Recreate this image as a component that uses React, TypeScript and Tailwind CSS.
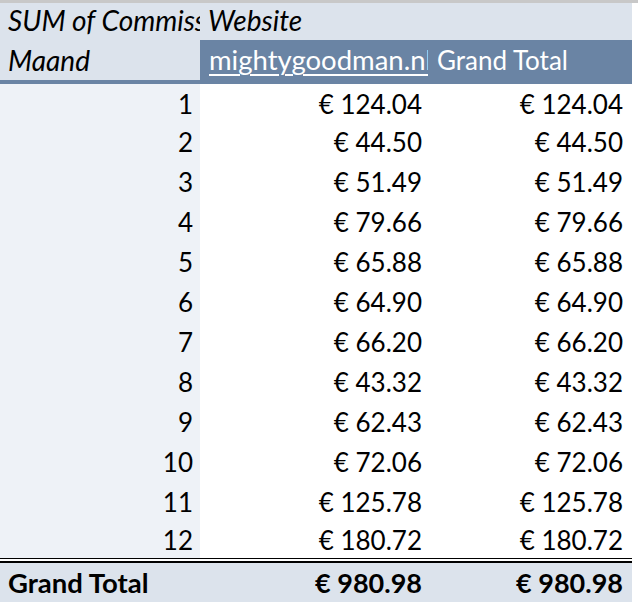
import React from "react";

const rows: [number, string][] = [
  [1, "124.04"],
  [2, "44.50"],
  [3, "51.49"],
  [4, "79.66"],
  [5, "65.88"],
  [6, "64.90"],
  [7, "66.20"],
  [8, "43.32"],
  [9, "62.43"],
  [10, "72.06"],
  [11, "125.78"],
  [12, "180.72"],
];

function DataRow({ n, v, h, lh }: { n: number; v: string; h: string; lh: string }) {
  return (
    <div className={`grid grid-cols-[200px_230px_202px] ${h}`}>
      <div className={`flex items-end justify-end bg-[#eef2f7] pr-[7px] ${lh}`}>{n}</div>
      <div className={`flex items-end justify-end bg-white pr-[8px] ${lh}`}>€ {v}</div>
      <div className={`flex items-end justify-end bg-white pr-[9px] ${lh}`}>€ {v}</div>
    </div>
  );
}

export default function App() {
  return (
    <div className="w-[638px] h-[608px] bg-white text-black font-['Lato','Open_Sans',sans-serif] text-[26px] overflow-hidden">
      <div className="h-[3px] w-full bg-[#c8c8c8]" />
      <div className="w-[632px]">
        <div className="grid grid-cols-[200px_230px_202px] h-[37px] bg-[#dce3ec] italic text-[28px]">
          <div className="flex items-end overflow-hidden whitespace-nowrap pl-[8px] leading-10">SUM of Commissie</div>
          <div className="flex items-end overflow-hidden whitespace-nowrap pl-[8px] leading-10">Website</div>
          <div />
        </div>
        <div className="grid grid-cols-[200px_230px_202px] h-[38px]">
          <div className="flex items-end overflow-hidden whitespace-nowrap bg-[#dce3ec] pl-[8px] leading-10 italic text-[28px]">Maand</div>
          <div className="flex items-end bg-[#6a84a4] pl-[9px] pr-[2px] text-white">
            <div className="overflow-hidden whitespace-nowrap text-[27.5px] leading-10 underline decoration-[1.5px] underline-offset-[4px]">
              mightygoodman.nl
            </div>
          </div>
          <div className="flex items-end overflow-hidden whitespace-nowrap bg-[#6a84a4] pl-[7px] leading-10 text-white">Grand Total</div>
        </div>
        <div className="h-[6px] bg-[#6a84a4]" />
        {rows.map(([n, v], i) => (
          <DataRow
            key={n}
            n={n}
            v={v}
            h={i === 0 ? "h-[38px]" : i === 11 ? "h-[35px]" : "h-[40px]"}
            lh={i === 11 ? "leading-[36px]" : "leading-10"}
          />
        ))}
        <div className="h-[2px] bg-black" />
        <div className="h-[2px] bg-white" />
        <div className="h-[2px] bg-black" />
        <div className="grid grid-cols-[200px_230px_202px] h-[39px] bg-[#dce3ec] font-bold text-[27px]">
          <div className="flex items-end whitespace-nowrap pl-[8px] text-[27.5px] leading-[38px]">Grand Total</div>
          <div className="flex items-end justify-end pr-[8px] leading-[38px]">€ 980.98</div>
          <div className="flex items-end justify-end pr-[9px] leading-[38px]">€ 980.98</div>
        </div>
      </div>
    </div>
  );
}
